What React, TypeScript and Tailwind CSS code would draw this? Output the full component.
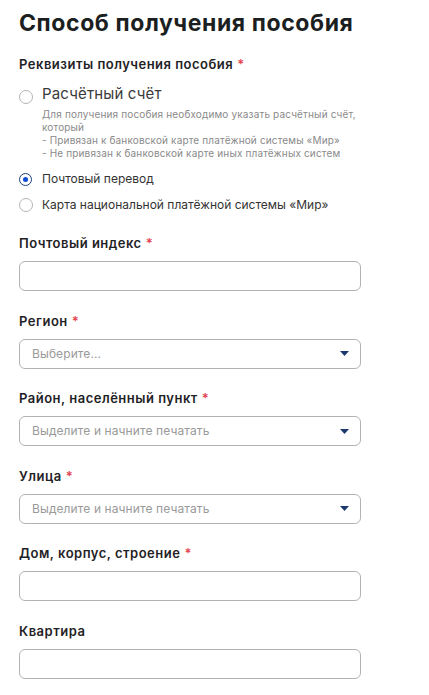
import React from 'react';

const font = { fontFamily: 'Inter, "Noto Sans", sans-serif' };

function Req() {
  return <span className="ml-1 text-[#e2434f]">*</span>;
}

function Radio({ checked }: { checked?: boolean }) {
  return checked ? (
    <span className="flex h-[13px] w-[13px] shrink-0 items-center justify-center rounded-full border-[1.5px] border-[#1d3f7a] bg-white">
      <span className="h-[5px] w-[5px] rounded-full bg-[#0d4cd3]" />
    </span>
  ) : (
    <span className="h-[14px] w-[14px] shrink-0 rounded-full border border-[#b4b4b4] bg-white" />
  );
}

function Caret() {
  return (
    <svg width="9" height="5" viewBox="0 0 9 5" className="shrink-0">
      <path d="M0 0h9L4.5 5z" fill="#1d3a6e" />
    </svg>
  );
}

function Field({ label, required, children }: { label: string; required?: boolean; children: React.ReactNode }) {
  return (
    <div className="mt-[21.5px] first:mt-0">
      <div className="text-[13px] font-semibold leading-4 tracking-[0.5px] text-[#1f2225]">
        {label}
        {required && <Req />}
      </div>
      <div className="mt-[10px]">{children}</div>
    </div>
  );
}

function TextBox() {
  return <div className="h-[30px] w-[342px] rounded-md border border-[#b3b3b3] bg-white" />;
}

function SelectBox({ placeholder }: { placeholder: string }) {
  return (
    <div className="flex h-[30px] w-[342px] items-center justify-between rounded-md border border-[#b3b3b3] bg-white pl-[12px] pr-[11px]">
      <span className="text-[12px] tracking-[0.1px] text-[#9a9a9a]">{placeholder}</span>
      <Caret />
    </div>
  );
}

export default function App() {
  return (
    <div className="min-h-[695px] w-[429px] bg-white px-[19px] pt-[8px] text-[#1f2225]" style={font}>
      <h1 className="text-[23px] font-bold leading-[30px] tracking-[0.6px] text-[#1c1f22]">Способ получения пособия</h1>

      <div className="mt-[18px] text-[13px] font-semibold leading-4 tracking-[0.5px]">
        Реквизиты получения пособия
        <Req />
      </div>

      <div className="mt-[12px] flex items-start gap-[9px]">
        <span className="mt-[6px] flex">
          <Radio />
        </span>
        <span className="text-[15px] leading-5 tracking-[0.15px] text-[#3a3a3a]">Расчётный счёт</span>
      </div>
      <div className="ml-[23px] mt-[4px] text-[10px] leading-[13px] tracking-[0.15px] text-[#8a8a8a]">
        Для получения пособия необходимо указать расчётный счёт,
        <br />
        который
        <br />- Привязан к банковской карте платёжной системы «Мир»
        <br />- Не привязан к банковской карте иных платёжных систем
      </div>

      <div className="mt-[11px] flex items-center gap-[10px]">
        <Radio checked />
        <span className="text-[12px] leading-4 text-[#333]">Почтовый перевод</span>
      </div>
      <div className="mt-[10px] flex items-center gap-[9px]">
        <Radio />
        <span className="text-[12px] leading-4 text-[#333]">Карта национальной платёжной системы «Мир»</span>
      </div>

      <div className="mt-[22px]">
        <Field label="Почтовый индекс" required>
          <TextBox />
        </Field>
        <Field label="Регион" required>
          <SelectBox placeholder="Выберите..." />
        </Field>
        <Field label="Район, населённый пункт" required>
          <SelectBox placeholder="Выделите и начните печатать" />
        </Field>
        <Field label="Улица" required>
          <SelectBox placeholder="Выделите и начните печатать" />
        </Field>
        <Field label="Дом, корпус, строение" required>
          <TextBox />
        </Field>
        <Field label="Квартира">
          <TextBox />
        </Field>
      </div>
    </div>
  );
}
